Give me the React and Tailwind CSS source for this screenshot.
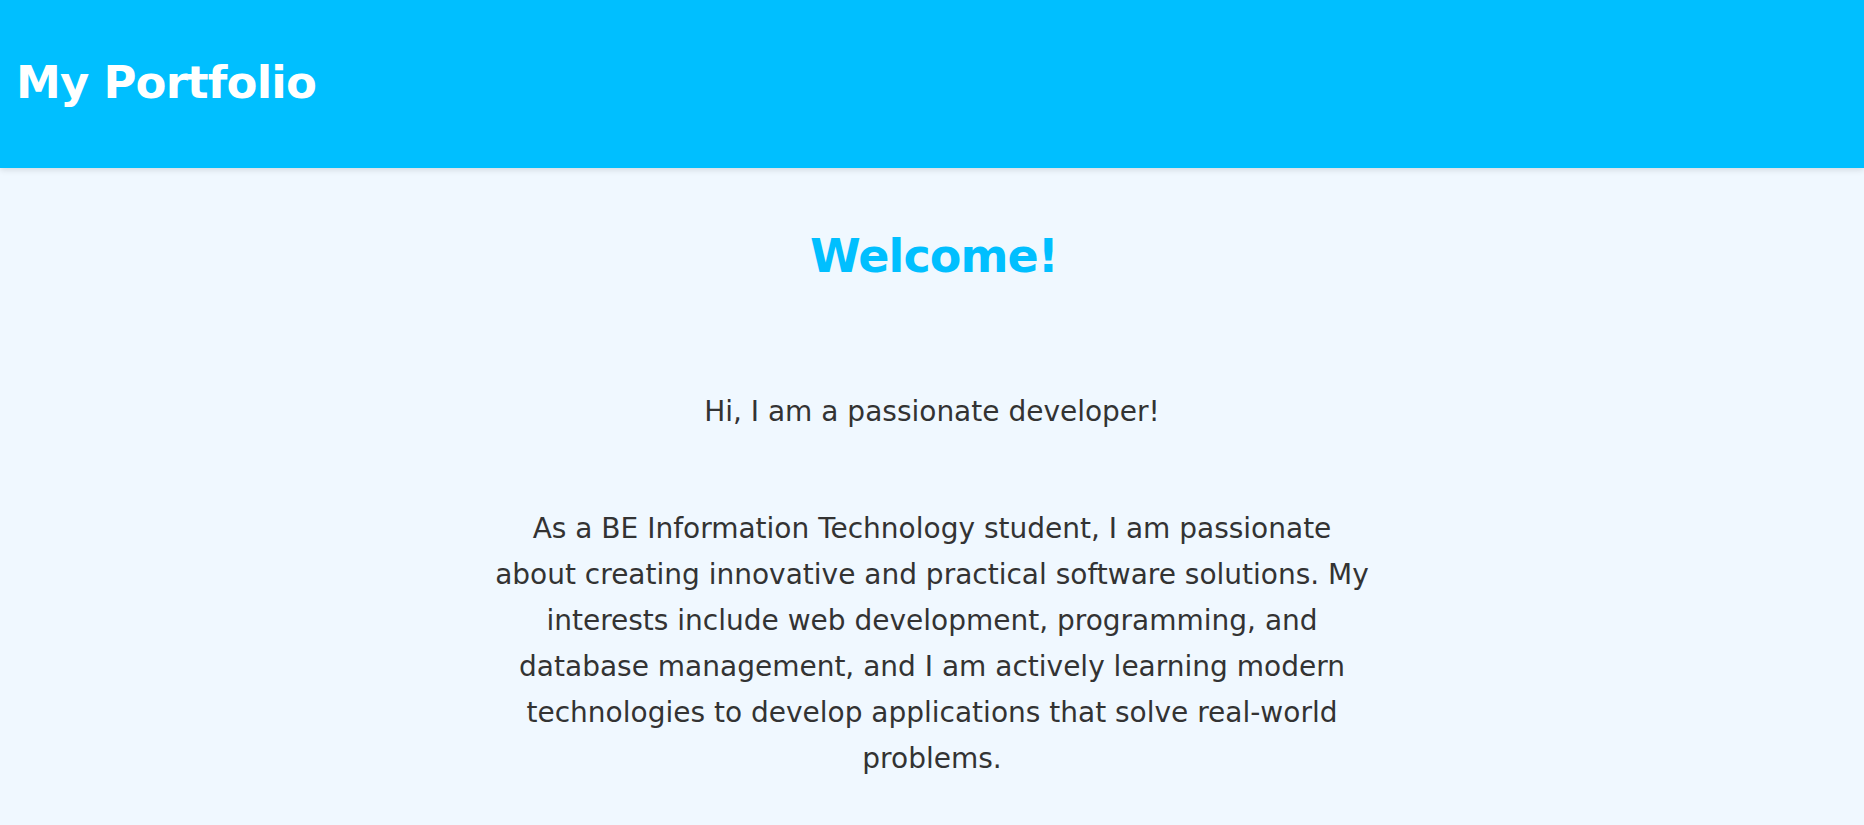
export default function App() {
  return (
    <div
      className="min-h-screen bg-[#F0F8FF] text-[#333333]"
      style={{ fontFamily: '"DejaVu Sans", "Liberation Sans", sans-serif' }}
    >
      <header className="h-[168px] bg-[#00BFFF] shadow-[0_2px_6px_rgba(0,0,0,0.12)] flex items-center pl-[16px] pb-[3px]">
        <h1 className="text-[45px] leading-[56px] font-bold tracking-[-0.8px] text-white">
          My Portfolio
        </h1>
      </header>
      <main className="flex flex-col items-center text-center">
        <h2 className="mt-[60px] ml-[4px] text-[46px] leading-[56px] font-bold tracking-[-0.9px] text-[#00BFFF]">
          Welcome!
        </h2>
        <p className="mt-[105px] text-[28px] leading-[46px]">
          Hi, I am a passionate developer!
        </p>
        <p className="mt-[71px] max-w-[1000px] text-[28px] leading-[46px]">
          As a BE Information Technology student, I am passionate
          <br />
          about creating innovative and practical software solutions. My
          <br />
          interests include web development, programming, and
          <br />
          database management, and I am actively learning modern
          <br />
          technologies to develop applications that solve real-world
          <br />
          problems.
        </p>
      </main>
    </div>
  );
}
